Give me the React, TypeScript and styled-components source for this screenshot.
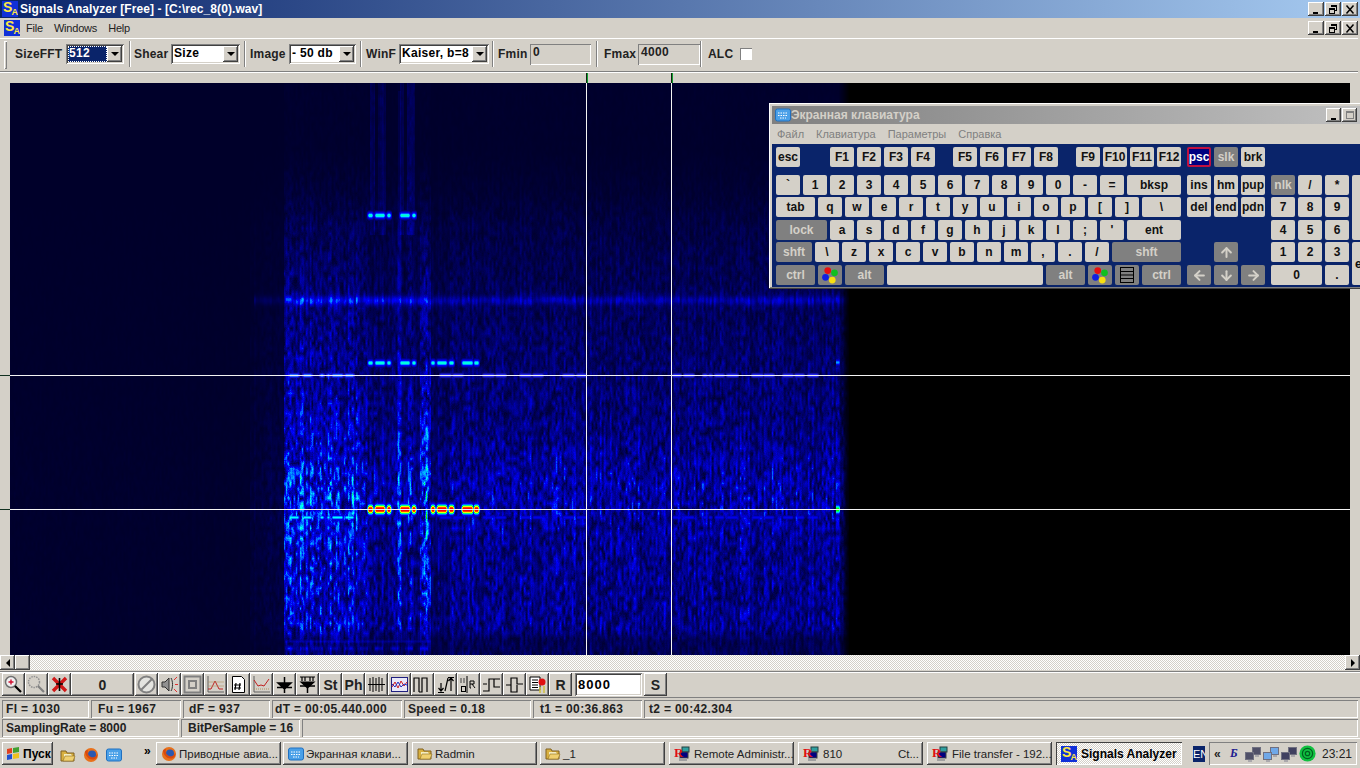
import React, { useEffect, useRef } from "react";
import styled, { createGlobalStyle, css } from "styled-components";
import { ArrowUp, ArrowDown, ArrowLeft, ArrowRight } from "lucide-react";

const face = "#d4d0c8";
const sans = `"Liberation Sans", Arial, sans-serif`;

const raised = css`
  background-color: ${face};
  box-shadow: inset -1px -1px #404040, inset 1px 1px #fff, inset -2px -2px #808080, inset 2px 2px ${face};
`;
const sunken = css`
  box-shadow: inset 1px 1px #808080, inset -1px -1px #fff, inset 2px 2px #404040, inset -2px -2px ${face};
`;
const softSunken = css`
  box-shadow: inset 1px 1px #808080, inset -1px -1px #fff;
`;
const hatched = css`
  background: repeating-conic-gradient(${face} 0 25%, #fff 0 50%) 0 0 / 2px 2px;
`;

const Global = createGlobalStyle`
  html, body { margin: 0; padding: 0; overflow: hidden; background: ${face}; }
  #root { width: 1360px; height: 768px; }
`;

const Screen = styled.div`
  position: relative;
  width: 1360px;
  height: 768px;
  overflow: hidden;
  display: flex;
  flex-direction: column;
  background: ${face};
  font: 12px ${sans};
  color: #000;
`;

/* ---------- title / menu ---------- */
const TitleBar = styled.div`
  height: 18px;
  display: flex;
  align-items: center;
  padding: 0 2px;
  background: linear-gradient(90deg, #0a246a, #a6caf0);
  color: #fff;
  font-weight: bold;
  font-size: 12px;
  letter-spacing: 0.08px;
`;
const TitleText = styled.span`
  margin-left: 2px;
  flex: 1;
  white-space: nowrap;
`;
const LogoBox = styled.span`
  position: relative;
  display: inline-block;
  flex: none;
  width: 16px;
  height: 16px;
  background: #1030d8;
  overflow: hidden;
`;
const LogoS = styled.span`
  position: absolute;
  left: 1px;
  top: -1px;
  font: bold 14px/14px ${sans};
  letter-spacing: 0;
  color: #ffe840;
`;
const LogoA = styled.span`
  position: absolute;
  right: 0;
  bottom: 0;
  font: bold 9px/9px ${sans};
  letter-spacing: 0;
  color: #ffe840;
`;
const Logo = () => (
  <LogoBox>
    <LogoS>S</LogoS>
    <LogoA>A</LogoA>
  </LogoBox>
);
const CaptionGroup = styled.div`
  display: flex;
  gap: 1px;
`;
const CaptionButton = styled.div`
  ${raised}
  width: 16px;
  height: 14px;
  display: flex;
  align-items: center;
  justify-content: center;
`;
const KbCaptionButton = styled(CaptionButton)`
  width: 15px;
`;
const CapIcon = ({ kind, color = "#000" }: { kind: "min" | "max" | "restore" | "close"; color?: string }) => (
  <svg width="10" height="9" viewBox="0 0 10 9" fill="none" stroke={color} shapeRendering="crispEdges">
    {kind === "min" && <path d="M2 7.5h5M2 8.5h5" />}
    {kind === "max" && <path d="M1.5 0.5h7v7h-7zM1.5 1.5h7" />}
    {kind === "restore" && <path d="M3.5 2V0.5h5v5H7M3.5 1.5h5M1.5 3.5h5v5h-5zM1.5 4.5h5" />}
    {kind === "close" && <path shapeRendering="auto" strokeWidth="1.5" d="M1.5 0.5l7 8M8.5 0.5l-7 8" />}
  </svg>
);
const Captions = () => (
  <CaptionGroup>
    <CaptionButton><CapIcon kind="min" /></CaptionButton>
    <CaptionButton><CapIcon kind="restore" /></CaptionButton>
    <CaptionButton><CapIcon kind="close" /></CaptionButton>
  </CaptionGroup>
);
const MenuBar = styled.div`
  height: 20px;
  display: flex;
  align-items: center;
  padding: 0 2px 0 4px;
`;
const MenuItems = styled.div`
  display: flex;
  gap: 11px;
  margin-left: 6px;
  flex: 1;
  color: #222;
  font-size: 11px;
  letter-spacing: -0.2px;
`;

/* ---------- top toolbar ---------- */
const TopToolbar = styled.div`
  height: 34px;
  box-sizing: border-box;
  margin-right: 2px;
  display: flex;
  align-items: flex-start;
  border-top: 1px solid #fff;
  border-bottom: 1px solid #808080;
  box-shadow: 0 1px #fff;
  padding: 2px 0 0 4px;
`;
const Grip = styled.div`
  width: 3px;
  height: 28px;
  box-shadow: inset 1px 1px #fff, inset -1px -1px #808080;
`;
const Section = styled.div<{ $w: number; $pad: number; $last?: boolean }>`
  width: ${(p) => p.$w}px;
  height: 26px;
  box-sizing: border-box;
  padding-left: ${(p) => p.$pad}px;
  display: flex;
  align-items: center;
  border-right: ${(p) => (p.$last ? "none" : "1px solid #fff")};
  box-shadow: ${(p) => (p.$last ? "none" : "inset -1px 0 #808080")};
`;
const ToolLabel = styled.span<{ $w: number }>`
  width: ${(p) => p.$w}px;
  font-weight: bold;
  font-size: 12px;
  letter-spacing: 0.2px;
  color: #222;
  white-space: nowrap;
`;
const Combo = styled.div<{ $w: number }>`
  ${sunken}
  width: ${(p) => p.$w}px;
  height: 20px;
  box-sizing: border-box;
  padding: 2px;
  background: #fff;
  display: flex;
  align-items: stretch;
`;
const ComboValue = styled.span<{ $sel?: boolean }>`
  flex: 1;
  min-width: 0;
  font-weight: bold;
  font-size: 12px;
  line-height: 15px;
  letter-spacing: 0.3px;
  padding-left: 1px;
  white-space: nowrap;
  overflow: hidden;
  ${(p) => p.$sel && css`
    background: #0a246a;
    color: #fff;
    outline: 1px dotted #fff;
    outline-offset: -1px;
  `}
`;
const ComboArrow = styled.span`
  ${raised}
  flex: none;
  width: 15px;
  display: flex;
  align-items: center;
  justify-content: center;
  &::after {
    content: "";
    border: 4px solid transparent;
    border-top: 4px solid #000;
    border-bottom: none;
  }
`;
const FreqInput = styled.div<{ $w: number }>`
  ${softSunken}
  width: ${(p) => p.$w}px;
  height: 21px;
  box-sizing: border-box;
  padding: 2px 3px;
  font-weight: bold;
  font-size: 12px;
  line-height: 13px;
  letter-spacing: 0.3px;
  color: #222;
`;
const AlcBox = styled.div`
  ${softSunken}
  width: 12px;
  height: 12px;
  background: #fff;
`;

/* ---------- plot ---------- */
const Workspace = styled.div`
  position: relative;
  height: 583px;
  box-sizing: border-box;
  padding: 11px 10px 0;
`;
const PlotCanvas = styled.canvas`
  display: block;
  width: 1340px;
  height: 572px;
  background: #000;
`;
const VCursor = styled.div`
  position: absolute;
  top: 1px;
  bottom: 0;
  width: 1px;
  background: linear-gradient(#102010 0 10px, #f4f4f4 10px);
  &::after {
    content: "";
    position: absolute;
    left: 1px;
    top: 0;
    width: 1px;
    height: 10px;
    background: #10a030;
  }
`;
const HCursor = styled.div`
  position: absolute;
  left: 0;
  right: 10px;
  height: 1px;
  background: linear-gradient(90deg, #103020 0 10px, #f4f4f4 10px);
`;

const ScrollBar = styled.div`
  ${hatched}
  height: 15px;
  display: flex;
`;
const ScrollBtn = styled.div`
  ${raised}
  width: 15px;
  height: 15px;
  display: flex;
  align-items: center;
  justify-content: center;
`;
const ScrollFill = styled.div`
  flex: 1;
`;
const TriLeft = styled.span`
  border: 4px solid transparent;
  border-right: 4px solid #000;
  border-left: none;
`;
const TriRight = styled.span`
  border: 4px solid transparent;
  border-left: 4px solid #000;
  border-right: none;
`;

/* ---------- bottom toolbar ---------- */
const BottomToolbar = styled.div`
  height: 27px;
  margin-top: 1px;
  box-sizing: border-box;
  border-top: 1px solid #808080;
  border-bottom: 1px solid #808080;
  box-shadow: inset 0 1px #fff;
  display: flex;
  align-items: center;
  padding-left: 2px;
`;
const ToolBtn = styled.div<{ $w?: number; $mr?: number }>`
  ${raised}
  width: ${(p) => p.$w ?? 23}px;
  height: 23px;
  margin-right: ${(p) => p.$mr ?? 0}px;
  flex: none;
  display: flex;
  align-items: center;
  justify-content: center;
  font-weight: bold;
  font-size: 14px;
  color: #222;
`;
const RateInput = styled.div`
  ${sunken}
  width: 67px;
  height: 23px;
  box-sizing: border-box;
  margin: 0 2px 0 3px;
  padding: 0 3px;
  background: #fff;
  font-weight: bold;
  font-size: 13px;
  line-height: 23px;
  letter-spacing: 1px;
`;

/* ---------- status ---------- */
const StatusRow = styled.div<{ $mt: number; $h: number; $ls: number }>`
  height: ${(p) => p.$h}px;
  margin-top: ${(p) => p.$mt}px;
  display: flex;
  gap: 2px;
  padding: 0 2px;
  letter-spacing: ${(p) => p.$ls}px;
`;
const StatusCell = styled.div<{ $w?: number; $pl?: number }>`
  ${softSunken}
  ${(p) => (p.$w ? `width: ${p.$w}px; flex: none;` : "flex: 1;")}
  box-sizing: border-box;
  padding: 1px 0 0 ${(p) => p.$pl ?? 4}px;
  font-weight: bold;
  font-size: 12px;
  line-height: 17px;
  white-space: nowrap;
  color: #222;
`;

/* ---------- taskbar ---------- */
const Taskbar = styled.div`
  height: 30px;
  margin-top: 1px;
  box-sizing: border-box;
  border-top: 1px solid #fff;
  padding: 3px 2px 0;
  display: flex;
`;
const StartButton = styled.div`
  ${raised}
  width: 51px;
  height: 23px;
  flex: none;
  display: flex;
  align-items: center;
  gap: 2px;
  padding-left: 3px;
  box-sizing: border-box;
  font-weight: bold;
  font-size: 12px;
`;
const Quick = styled.div`
  width: 103px;
  flex: none;
  display: flex;
  align-items: center;
  padding-left: 7px;
  box-sizing: border-box;
  gap: 7px;
`;
const Chevron = styled.span`
  margin: -8px 0 0 15px;
  font: bold 12px ${sans};
`;
const TaskButton = styled.div<{ $left: number; $active?: boolean }>`
  width: ${(p) => (p.$active ? 126 : 125)}px;
  height: 23px;
  flex: none;
  margin-left: ${(p) => p.$left}px;
  box-sizing: border-box;
  display: flex;
  align-items: center;
  gap: ${(p) => (p.$active ? 4 : 2)}px;
  padding-left: 5px;
  white-space: nowrap;
  overflow: hidden;
  font-size: 11.5px;
  color: #222;
  ${(p) => p.$active
    ? css`
        ${hatched}
        box-shadow: inset 1px 1px #404040, inset -1px -1px #fff;
        font-weight: bold;
        font-size: 12px;
        color: #000;
      `
    : raised}
`;
const TaskLabel = styled.span`
  flex: 1;
  display: flex;
  justify-content: space-between;
  padding-right: 4px;
`;
const Lang = styled.div`
  width: 12px;
  height: 16px;
  margin: 4px 4px 0 11px;
  flex: none;
  background: #0a246a;
  color: #fff;
  font-size: 11px;
  line-height: 16px;
  overflow: hidden;
`;
const Tray = styled.div`
  ${softSunken}
  width: 148px;
  height: 23px;
  flex: none;
  box-sizing: border-box;
  display: flex;
  align-items: center;
  padding-left: 5px;
`;
const TrayBack = styled.span`
  font: bold 12px ${sans};
  width: 16px;
  color: #222;
`;
const TrayB = styled.span`
  font: italic bold 12px "Liberation Serif", serif;
  color: #202090;
  width: 15px;
`;
const Clock = styled.span`
  margin-left: 6px;
  font-size: 12px;
  color: #222;
`;
const RadminBox = styled.span`
  position: relative;
  width: 16px;
  height: 16px;
  flex: none;
  display: inline-block;
  margin-right: 2px;
`;
const RadminR = styled.span`
  position: absolute;
  left: 0;
  top: 0;
  font: bold 13px/13px "Liberation Serif", serif;
  color: #e01010;
`;

/* ---------- on-screen keyboard ---------- */
const KbWindow = styled.div`
  ${raised}
  position: absolute;
  left: 769px;
  top: 103px;
  width: 594px;
  height: 186px;
  box-sizing: border-box;
  padding: 3px;
`;
const KbTitle = styled.div`
  height: 18px;
  display: flex;
  align-items: center;
  padding: 0 3px;
  background: linear-gradient(90deg, #808080, #c0c0c0);
  color: ${face};
  font-weight: bold;
  font-size: 12px;
`;
const KbTitleText = styled.span`
  flex: 1;
  margin-left: 0;
`;
const KbMenu = styled.div`
  height: 20px;
  display: flex;
  align-items: center;
  gap: 12px;
  padding-left: 5px;
  color: #808080;
  font-size: 11px;
`;
const KbBody = styled.div`
  height: 143px;
  box-sizing: border-box;
  background: #0a246a;
  padding: 3px 0 0 4px;
  display: flex;
  gap: 3px;
  overflow: hidden;
`;
const KbMain = styled.div`
  width: 573px;
  flex: none;
`;
const KbSide = styled.div`
  margin-top: 28px;
  display: flex;
  flex-direction: column;
  gap: 2px;
`;
const KbRow = styled.div<{ $mt?: number }>`
  display: flex;
  gap: 3px;
  margin-top: ${(p) => p.$mt ?? 0}px;
`;
const Key = styled.div<{ $w?: number; $h?: number; $ml?: number; $kind?: string }>`
  width: ${(p) => p.$w ?? 24}px;
  height: ${(p) => p.$h ?? 20}px;
  margin-left: ${(p) => p.$ml ?? 0}px;
  flex: none;
  box-sizing: border-box;
  border-radius: 2px;
  display: flex;
  align-items: center;
  justify-content: center;
  font-weight: bold;
  font-size: 12px;
  white-space: nowrap;
  overflow: hidden;
  color: #111;
  background: ${face};
  ${(p) => p.$kind === "dark" && css`
    background: #808080;
    color: ${face};
  `}
  ${(p) => p.$kind === "on" && css`
    background: #000080;
    color: #fff;
    border: 2px solid #c01040;
  `}
`;

/* ---------- drawings ---------- */
const WinFlag = ({ s = 18 }: { s?: number }) => (
  <svg width={s} height={s} viewBox="0 0 16 16" style={{ flex: "none" }}>
    <circle cx="6" cy="4" r="3" fill="#e81010" />
    <circle cx="12" cy="6" r="3" fill="#10c020" />
    <circle cx="4" cy="10" r="3" fill="#1020e0" />
    <circle cx="10" cy="12.5" r="3" fill="#f8e010" />
  </svg>
);
const StartFlag = () => (
  <svg width="16" height="16" viewBox="0 0 16 16" style={{ flex: "none" }}>
    <path d="M2 3l5-1v5l-5 1z" fill="#e04020" />
    <path d="M8 2l6-1v5l-6 1z" fill="#40a030" />
    <path d="M2 9l5-1v5l-5 1z" fill="#2050d0" />
    <path d="M8 8l6-1v5l-6 1z" fill="#f0c020" />
  </svg>
);
const MenuKeyIcon = () => (
  <svg width="14" height="16" viewBox="0 0 14 16" fill="#808080" stroke="#000">
    <rect x="0.5" y="0.5" width="13" height="15" />
    <path d="M1 4.500h12M1 8h12M1 11.500h12" />
  </svg>
);
const Folder = () => (
  <svg width="16" height="15" viewBox="0 0 16 15" style={{ flex: "none" }}>
    <path d="M1 3h5l1 2h7v8H1z" fill="#d8b040" stroke="#806020" />
    <path d="M4 6h7l1 2v3H4z" fill="#f4ecc0" />
    <path d="M3 13l2-5h10l-2 5z" fill="#f0d070" stroke="#907020" strokeWidth=".6" />
  </svg>
);
const Firefox = () => (
  <svg width="16" height="16" viewBox="0 0 16 16" style={{ flex: "none" }}>
    <circle cx="8" cy="8" r="7" fill="#e8701a" />
    <circle cx="9" cy="7.500" r="4" fill="#2a58b0" />
    <path d="M2 5c1 5 5 9 10 7 2-1 3-3 2-6 0 4-4 5-6 4S4 7 5 3C3 3 2 4 2 5z" fill="#d84a10" />
  </svg>
);
const KbdIcon = () => (
  <svg width="16" height="14" viewBox="0 0 16 14" style={{ flex: "none" }}>
    <rect x="0.5" y="1" width="15" height="12" rx="2" fill="#4aa0e8" stroke="#2070c0" />
    <path d="M3 5h10M3 7.500h10M5 10h6" stroke="#fff" strokeDasharray="1.5 1" />
  </svg>
);
const Radmin = () => (
  <RadminBox>
    <svg width="16" height="16" viewBox="0 0 16 16">
      <rect x="8" y="1" width="7" height="5" fill="#30a0a0" stroke="#204040" />
      <rect x="6" y="6" width="8" height="6" fill="#000080" stroke="#404040" />
      <rect x="5" y="12" width="8" height="3" fill="#a0a0a0" />
    </svg>
    <RadminR>R</RadminR>
  </RadminBox>
);
const NetIcon = ({ c }: { c: string }) => (
  <svg width="16" height="16" viewBox="0 0 16 16" style={{ flex: "none", marginRight: 2 }}>
    <rect x="7.500" y="1.500" width="8" height="7" fill={c} stroke="#707080" />
    <rect x="0.500" y="6.500" width="8" height="7" fill={c} stroke="#707080" />
    <path d="M3 15h4M10 10h4" stroke="#808090" />
  </svg>
);
const GreenRing = () => (
  <svg width="17" height="17" viewBox="0 0 20 20" style={{ flex: "none" }}>
    <circle cx="10" cy="10" r="9.500" fill="#10c040" />
    <circle cx="10" cy="10" r="6" fill="none" stroke="#006020" strokeWidth="1.400" />
    <circle cx="10" cy="10" r="2.600" fill="none" stroke="#006020" strokeWidth="1.400" />
  </svg>
);

const I = ({ children }: { children: React.ReactNode }) => (
  <svg width="19" height="19" viewBox="0 0 19 19" fill="none" stroke="#000" strokeWidth="1">
    {children}
  </svg>
);
const icons: Record<string, React.ReactNode> = {
  zoomIn: <I><circle cx="7" cy="7" r="5.500" stroke="#707070" strokeWidth="1.500" fill="#f0f0f0" /><path d="M4.500 7h5M7 4.500v5" stroke="#d01030" strokeWidth="1.400" /><path d="M11 11l6 6" strokeWidth="2.200" /></I>,
  zoomOut: <I><circle cx="7" cy="7" r="5.500" stroke="#909090" strokeWidth="1.500" strokeDasharray="1.500 1" /><path d="M11 11l6 6" stroke="#808080" strokeWidth="2.200" /></I>,
  cross: <I><path d="M3 3l13 13M16 3L3 16" stroke="#d01818" strokeWidth="3.400" /><path d="M9.500 3v13M6 9h7" stroke="#000" strokeWidth="1.600" /></I>,
  ban: <I><circle cx="9.500" cy="9.500" r="8" stroke="#808080" strokeWidth="2" fill="#e4e4e0" /><path d="M4 15L15 4" stroke="#808080" strokeWidth="2" /></I>,
  speaker: <I><path d="M2 7h3l4-4v13l-4-4H2z" fill="#909090" stroke="#303030" /><path d="M11 3c2 3 2 10 0 13" stroke="#303030" /><path d="M14 5l3-3M15 9.500h3M14 14l3 3" stroke="#e03030" /></I>,
  square: <I><rect x="1.500" y="1.500" width="16" height="16" stroke="#808080" strokeWidth="2" /><rect x="6" y="6" width="7" height="7" stroke="#808080" strokeWidth="2" /></I>,
  chartA: <I><path d="M2 1v16h16" stroke="#606060" /><path d="M2 14h3l4-8 4 8h4" stroke="#c02020" /><path d="M2 11h16M2 7h16" stroke="#b09060" strokeWidth=".6" /></I>,
  docHash: <I><path d="M3.500 1.500h9l3 3v13h-12z" fill="#fff" /><path d="M7 8l-1 7M11 8l-1 7M5 10h7M5 13h7" strokeWidth="1.200" /></I>,
  chartV: <I><path d="M2 1v16h16" stroke="#606060" /><path d="M2 5l4 6 3-1 3 1 5-7" stroke="#c02020" /><path d="M2 14h16" stroke="#b09060" strokeDasharray="1 1" /></I>,
  down: <I><path d="M9.500 2v6M3 8h13l-6.500 6zM2 12.500h15M9.500 14v4" fill="#000" strokeWidth="1.500" /></I>,
  downT: <I><path d="M2 2h15M4 2v4M7 2v4M12 2v4M15 2v4M3 7h13l-6.500 6z" fill="#000" strokeWidth="1.200" /><path d="M2 11h15M9.500 13v5" strokeWidth="1.500" /></I>,
  hatch: <I><path d="M1 9.500h17M3 3v13M6 2v15M9 3v13M12 2v15M15 3v13" /></I>,
  squig: <I><rect x="1.500" y="2.500" width="16" height="14" fill="#e8e8f8" stroke="#202080" /><path d="M2 12l3-5 3 6 3-7 3 5 3-4" stroke="#d02020" /><path d="M2 9l3 3 3-5 3 5 3-3 3 1" stroke="#2030c0" /></I>,
  pulses: <I><path d="M1 17V3h5v14M6 17h3V3h5v14" strokeWidth="1.200" /></I>,
  updown: <I><path d="M5 8v8M2.500 13l2.500 3 2.500-3M2 17.500h6M9 16l3-13M15 16V3M12.500 6L15 3l2.500 3M12 2.500h6" strokeWidth="1.200" /></I>,
  qr: <I><path d="M8 1v17" /><rect x="2.500" y="11.500" width="4" height="5" /><path d="M2 3v5M5 3v5" stroke="#404040" /><path d="M11 6v7h1M11 6h4v3h-4M13 9l3 4" /></I>,
  step: <I><path d="M1 16h6V4h5v8h6M1 9h4M12 4h6" strokeWidth="1.200" /></I>,
  bump: <I><path d="M1 10h5V3h6v6h6M6 10v7h6v-7" strokeWidth="1.200" /></I>,
  docRed: <I><path d="M2 2h10v13H2z" fill="#fff" /><path d="M4 5h6M4 7.500h6M4 10h6M4 12.500h6" /><circle cx="14" cy="7" r="3.500" fill="#e01010" stroke="none" /><path d="M12 12v6M16 11v7" stroke="#d0c040" strokeWidth="1.500" /></I>,
};

/* ---------- spectrogram ---------- */
const SEG_A: [number, number][] = [[368, 372], [375, 384], [387, 390], [400, 409], [412, 415], [431, 434], [437, 446], [449, 453], [462, 472], [474, 478]];
const SEG_B: [number, number][] = [[289, 298], [303, 311], [320, 323], [327, 329], [332, 342], [345, 353]];
const SEG_C: [number, number][] = [[440, 450], [453, 462], [483, 493], [496, 505], [520, 530], [533, 542], [563, 573], [577, 585], [673, 680], [684, 693], [703, 706], [709, 711], [715, 723], [727, 737], [752, 762], [764, 773], [783, 792], [795, 803], [808, 817]];

function segAmount(x: number, segs: [number, number][]) {
  for (const [a, b] of segs) {
    if (x >= a - 1 && x <= b + 1) {
      const edge = Math.min(x - (a - 1), b + 1 - x);
      return Math.min(1, 0.65 + edge * 0.25);
    }
  }
  return 0;
}
const STOPS: [number, number, number, number][] = [
  [0, 0, 0, 0], [0.55, 0, 0, 255], [0.63, 0, 110, 255], [0.72, 0, 255, 255],
  [0.8, 0, 255, 0], [0.88, 255, 255, 0], [1, 255, 0, 0],
];
function colour(v: number): [number, number, number] {
  if (v >= 1) return [255, 0, 0];
  if (v <= 0) return [0, 0, 0];
  for (let i = 1; i < STOPS.length; i++) {
    if (v <= STOPS[i][0]) {
      const a = STOPS[i - 1], b = STOPS[i];
      const t = (v - a[0]) / (b[0] - a[0]);
      return [a[1] + (b[1] - a[1]) * t, a[2] + (b[2] - a[2]) * t, a[3] + (b[3] - a[3]) * t];
    }
  }
  return [255, 0, 0];
}
function timeFactor(x: number) {
  if (x < 250) return 0.02;
  if (x < 284) return 0.08 + ((x - 250) / 34) * 0.1;
  if (x < 368) return 1;
  if (x < 397) return 0.6;
  if (x < 402) return 1;
  if (x < 408) return 0.5;
  if (x < 412) return 0.8;
  if (x < 420) return 0.6;
  if (x < 431) return 1.15;
  if (x < 450) return 0.45;
  return 0.62;
}
function drawSpectrum(cv: HTMLCanvasElement) {
  const W = 1340, H = 572, ox = 10, oy = 83;
  const ctx = cv.getContext("2d");
  if (!ctx) return;
  let seed = 12345;
  const rnd = () => {
    seed = (seed * 1664525 + 1013904223) >>> 0;
    return seed / 4294967296;
  };
  const cw = 2, ch = 5;
  const gw = Math.ceil(W / cw) + 2, gh = Math.ceil(H / ch) + 2;
  const grid = new Float32Array(gw * gh);
  for (let i = 0; i < grid.length; i++) grid[i] = rnd();
  const cols = new Float32Array(W + 4);
  for (let i = 0; i < cols.length; i++) cols[i] = rnd();
  const speckle = (x: number, y: number) => {
    const gx = x / cw, gy = y / ch;
    const ix = Math.floor(gx), iy = Math.floor(gy);
    const fx = gx - ix, fy = gy - iy;
    const a = grid[iy * gw + ix], b = grid[iy * gw + ix + 1];
    const c = grid[(iy + 1) * gw + ix], d = grid[(iy + 1) * gw + ix + 1];
    return (a * (1 - fx) + b * fx) * (1 - fy) + (c * (1 - fx) + d * fx) * fy;
  };
  const img = ctx.createImageData(W, H);
  const gauss = (y: number, c: number, s: number) => Math.exp(-((y - c) * (y - c)) / (s * s));
  for (let py = 0; py < H; py++) {
    const y = py + oy;
    const onset = Math.min(1, Math.max(0, (y - 150) / 80));
    let F = Math.min(1, Math.max(0, (y - 190) / 290));
    F += gauss(y, 495, 40) * 0.3;
    if (y > 628) F *= Math.max(0.35, 1 - (y - 628) / 18);
    for (let px = 0; px < W; px++) {
      const x = px + ox;
      const o = (py * W + px) * 4;
      let r = 0, g = 0, b = 0;
      if (x < 849) {
        const col = 0.72 + 0.56 * cols[Math.floor(px / 2) * 2];
        const sp = speckle(px, py) * 0.85 + rnd() * 0.15;
        const amp = (0.012 + onset * 0.07 + 0.38 * F) * timeFactor(x) * col;
        let v = 0.09 + amp * sp * 1.45;
        // upper vertical columns
        if (y < 235 && ((x >= 370 && x < 375) || (x >= 378 && x < 386) || (x >= 400 && x < 404) || (x >= 407 && x < 415))) {
          v += 0.09 * col * (0.5 + sp * 0.7);
        }
        // streaks
        if (y > 380 && y < 625) {
          if (Math.abs(x - 327) < 1) v += 0.1;
          if (Math.abs(x - 399) < 1.5) v += 0.12;
          if (x >= 422 && x < 430) v += 0.08 * sp;
        }
        if (y > 90 && y < 380 && Math.abs(x - 399) < 1.2) v += 0.05 + 0.08 * F;
        // horizontal band at 300
        if (x >= 254) {
          const k = x < 285 ? 0.08 : x < 431 ? 0.3 : 0.18;
          v += gauss(y, 300, 4.5) * k * col;
        }
        // soft ceiling for the noise floor: peaks stay blue-cyan
        if (v > 0.6) v = 0.6 + (v - 0.6) * 0.4;
        // keyed tone segments
        const a = segAmount(x, SEG_A);
        if (a > 0) {
          if (x < 420) v = Math.max(v, gauss(y, 215, 4.5) * 0.74 * a);
          v = Math.max(v, gauss(y, 362.5, 4.5) * 0.74 * a);
          v = Math.max(v, gauss(y, 509, 7) * 1.05 * a);
        }
        const c1 = segAmount(x, SEG_B);
        if (c1 > 0) {
          v = Math.max(v, gauss(y, 375, 3) * 0.68 * c1);
          v = Math.max(v, gauss(y, 517, 3.2) * 0.72 * c1);
        }
        const c2 = segAmount(x, SEG_C);
        if (c2 > 0) {
          v = Math.max(v, gauss(y, 375, 3) * 0.56 * c2);
          v = Math.max(v, gauss(y, 517, 2.8) * 0.5 * c2);
        }
        // lower rows
        if (x >= 285 && x < 431) {
          v += gauss(y, 641, 1.5) * 0.12;
          if ((x % 15) < 8) v += gauss(y, 648, 2) * 0.16;
        }
        // signal edge blips
        if (x >= 836 && x <= 839) {
          v = Math.max(v, gauss(y, 362, 4) * 0.66);
          v = Math.max(v, gauss(y, 509, 7) * 0.82);
        }
        if (x > 838) v *= (849 - x) / 11;
        [r, g, b] = colour(v);
        if (c1 > 0 || c2 > 0) {
          const w = gauss(y, 375, 2) * 0.25 * Math.max(c1, c2);
          r += (190 - r) * w;
          g += (200 - g) * w;
        }
      }
      img.data[o] = r;
      img.data[o + 1] = g;
      img.data[o + 2] = b;
      img.data[o + 3] = 255;
    }
  }
  ctx.putImageData(img, 0, 0);
}
const Spectrum = () => {
  const ref = useRef<HTMLCanvasElement>(null);
  useEffect(() => {
    if (ref.current) drawSpectrum(ref.current);
  }, []);
  return <PlotCanvas ref={ref} width={1340} height={572} />;
};

/* ---------- data ---------- */
type K = { t?: React.ReactNode; w?: number; ml?: number; kind?: string };
const keys = (s: string): K[] => s.split(" ").map((t) => ({ t }));
const arrow = { size: 15, strokeWidth: 3.2 };
const rows: { mt: number; keys: K[] }[] = [
  { mt: 0, keys: [
    { t: "esc" }, { t: "F1", ml: 27 }, ...keys("F2 F3 F4"), { t: "F5", ml: 15 }, ...keys("F6 F7 F8"),
    { t: "F9", ml: 15 }, ...keys("F10 F11 F12"), { t: "psc", ml: 3, kind: "on" }, { t: "slk", kind: "dark" }, { t: "brk" },
  ] },
  { mt: 8, keys: [
    ...keys("` 1 2 3 4 5 6 7 8 9 0 - ="), { t: "bksp", w: 54 }, { t: "ins", ml: 3 }, { t: "hm" }, { t: "pup" },
    { t: "nlk", ml: 3, kind: "dark" }, { t: "/" }, { t: "*" },
  ] },
  { mt: 2, keys: [
    { t: "tab", w: 39 }, ...keys("q w e r t y u i o p [ ]"), { t: "\\", w: 39 }, { t: "del", ml: 3 }, { t: "end" }, { t: "pdn" },
    { t: "7", ml: 3 }, { t: "8" }, { t: "9" },
  ] },
  { mt: 3, keys: [
    { t: "lock", w: 51, kind: "dark" }, ...keys("a s d f g h j k l ; '"), { t: "ent", w: 54 },
    { t: "4", ml: 87 }, { t: "5" }, { t: "6" },
  ] },
  { mt: 2, keys: [
    { t: "shft", w: 36, kind: "dark" }, ...keys("\\ z x c v b n m , . /"), { t: "shft", w: 69, kind: "dark" },
    { t: <ArrowUp {...arrow} />, ml: 30, kind: "dark" }, { t: "1", ml: 30 }, { t: "2" }, { t: "3" },
  ] },
  { mt: 3, keys: [
    { t: "ctrl", w: 39, kind: "dark" }, { t: <WinFlag />, kind: "dark" }, { t: "alt", w: 39, kind: "dark" }, { t: "", w: 156 },
    { t: "alt", w: 39, kind: "dark" }, { t: <WinFlag />, kind: "dark" }, { t: <MenuKeyIcon />, kind: "dark" }, { t: "ctrl", w: 39, kind: "dark" },
    { t: <ArrowLeft {...arrow} />, ml: 3, kind: "dark" }, { t: <ArrowDown {...arrow} />, kind: "dark" }, { t: <ArrowRight {...arrow} />, kind: "dark" },
    { t: "0", ml: 3, w: 51 }, { t: "." },
  ] },
];
const toolsA = ["ban", "speaker", "square", "chartA", "docHash", "chartV", "down", "downT"];
const toolsB = ["hatch", "squig", "pulses", "updown", "qr", "step", "bump", "docRed"];
const tasks: { icon: React.ReactNode; label: React.ReactNode; left: number }[] = [
  { icon: <Firefox />, label: "Приводные авиа...", left: 0 },
  { icon: <KbdIcon />, label: "Экранная клави...", left: 2 },
  { icon: <Folder />, label: "Radmin", left: 4 },
  { icon: <Folder />, label: "_1", left: 3 },
  { icon: <Radmin />, label: "Remote Administr...", left: 4 },
  { icon: <Radmin />, label: <TaskLabel><span>810</span><span>Ct...</span></TaskLabel>, left: 4 },
  { icon: <Radmin />, label: "File transfer - 192...", left: 4 },
];

export default function App() {
  return (
    <Screen>
      <Global />
      <TitleBar>
        <Logo />
        <TitleText>Signals Analyzer [Free] - [C:\rec_8(0).wav]</TitleText>
        <Captions />
      </TitleBar>
      <MenuBar>
        <Logo />
        <MenuItems>
          <span>File</span>
          <span>Windows</span>
          <span>Help</span>
        </MenuItems>
        <Captions />
      </MenuBar>

      <TopToolbar>
        <Grip />
        <Section $w={124} $pad={8}>
          <ToolLabel $w={51}>SizeFFT</ToolLabel>
          <Combo $w={58}><ComboValue $sel>512</ComboValue><ComboArrow /></Combo>
        </Section>
        <Section $w={115} $pad={3}>
          <ToolLabel $w={37}>Shear</ToolLabel>
          <Combo $w={69}><ComboValue>Size</ComboValue><ComboArrow /></Combo>
        </Section>
        <Section $w={116} $pad={4}>
          <ToolLabel $w={39}>Image</ToolLabel>
          <Combo $w={67}><ComboValue>- 50 db</ComboValue><ComboArrow /></Combo>
        </Section>
        <Section $w={132} $pad={4}>
          <ToolLabel $w={33}>WinF</ToolLabel>
          <Combo $w={90}><ComboValue>Kaiser, b=8</ComboValue><ComboArrow /></Combo>
        </Section>
        <Section $w={104} $pad={4}>
          <ToolLabel $w={32}>Fmin</ToolLabel>
          <FreqInput $w={61}>0</FreqInput>
        </Section>
        <Section $w={104} $pad={6}>
          <ToolLabel $w={34}>Fmax</ToolLabel>
          <FreqInput $w={62}>4000</FreqInput>
        </Section>
        <Section $w={60} $pad={6} $last>
          <ToolLabel $w={32}>ALC</ToolLabel>
          <AlcBox />
        </Section>
      </TopToolbar>

      <Workspace>
        <Spectrum />
        <VCursor style={{ left: 586 }} />
        <VCursor style={{ left: 671 }} />
        <HCursor style={{ top: 303 }} />
        <HCursor style={{ top: 437 }} />
      </Workspace>

      <ScrollBar>
        <ScrollBtn><TriLeft /></ScrollBtn>
        <ScrollBtn />
        <ScrollFill />
        <ScrollBtn><TriRight /></ScrollBtn>
      </ScrollBar>

      <BottomToolbar>
        <ToolBtn>{icons.zoomIn}</ToolBtn>
        <ToolBtn>{icons.zoomOut}</ToolBtn>
        <ToolBtn>{icons.cross}</ToolBtn>
        <ToolBtn $w={63} $mr={1}>0</ToolBtn>
        {toolsA.map((n) => <ToolBtn key={n}>{icons[n]}</ToolBtn>)}
        <ToolBtn>St</ToolBtn>
        <ToolBtn>Ph</ToolBtn>
        {toolsB.map((n) => <ToolBtn key={n}>{icons[n]}</ToolBtn>)}
        <ToolBtn>R</ToolBtn>
        <RateInput>8000</RateInput>
        <ToolBtn>S</ToolBtn>
      </BottomToolbar>

      <StatusRow $mt={2} $h={18} $ls={0.35}>
        <StatusCell $w={87}>Fl = 1030</StatusCell>
        <StatusCell $w={90} $pl={7}>Fu = 1967</StatusCell>
        <StatusCell $w={87} $pl={6}>dF = 937</StatusCell>
        <StatusCell $w={130} $pl={3}>dT = 00:05.440.000</StatusCell>
        <StatusCell $w={127}>Speed = 0.18</StatusCell>
        <StatusCell $w={109} $pl={7}>t1 = 00:36.863</StatusCell>
        <StatusCell $pl={5}>t2 = 00:42.304</StatusCell>
      </StatusRow>
      <StatusRow $mt={1} $h={18} $ls={0}>
        <StatusCell $w={177}>SamplingRate = 8000</StatusCell>
        <StatusCell $w={119} $pl={7}>BitPerSample = 16</StatusCell>
        <StatusCell />
      </StatusRow>

      <Taskbar>
        <StartButton><StartFlag />Пуск</StartButton>
        <Quick>
          <Folder />
          <Firefox />
          <KbdIcon />
          <Chevron>»</Chevron>
        </Quick>
        {tasks.map((t, i) => (
          <TaskButton key={i} $left={t.left}>{t.icon}{t.label}</TaskButton>
        ))}
        <TaskButton $left={4} $active><Logo />Signals Analyzer</TaskButton>
        <Lang>EN</Lang>
        <Tray>
          <TrayBack>«</TrayBack>
          <TrayB>Б</TrayB>
          <NetIcon c="#505068" />
          <NetIcon c="#70a8e8" />
          <NetIcon c="#404060" />
          <GreenRing />
          <Clock>23:21</Clock>
        </Tray>
      </Taskbar>

      <KbWindow>
        <KbTitle>
          <KbdIcon />
          <KbTitleText>Экранная клавиатура</KbTitleText>
          <CaptionGroup>
            <KbCaptionButton><CapIcon kind="min" /></KbCaptionButton>
            <KbCaptionButton><CapIcon kind="max" color="#808080" /></KbCaptionButton>
          </CaptionGroup>
        </KbTitle>
        <KbMenu>
          <span>Файл</span>
          <span>Клавиатура</span>
          <span>Параметры</span>
          <span>Справка</span>
        </KbMenu>
        <KbBody>
          <KbMain>
            {rows.map((r, i) => (
              <KbRow key={i} $mt={r.mt}>
                {r.keys.map((k, j) => (
                  <Key key={j} $w={k.w} $ml={k.ml} $kind={k.kind}>{k.t}</Key>
                ))}
              </KbRow>
            ))}
          </KbMain>
          <KbSide>
            <Key $h={65}>+</Key>
            <Key $h={43} $w={24}>ent</Key>
          </KbSide>
        </KbBody>
      </KbWindow>
    </Screen>
  );
}
